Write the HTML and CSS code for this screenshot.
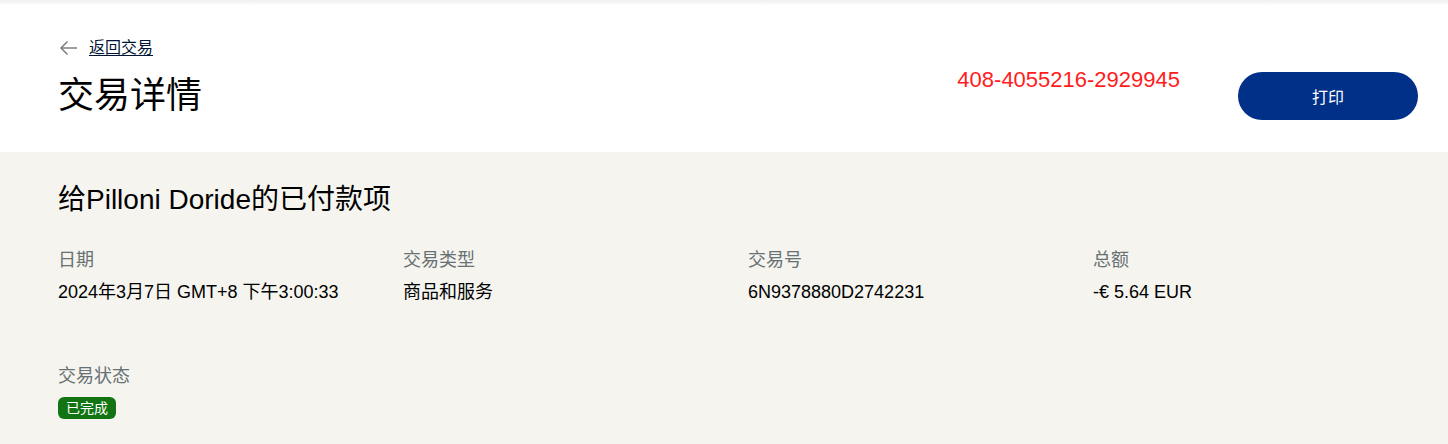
FILE: index.html
```html
<!DOCTYPE html>
<html lang="zh-CN">
<head>
<meta charset="utf-8">
<title>交易详情</title>
<link rel="stylesheet" href="styles.css">
</head>
<body>
<header class="page-header">
  <div class="header-left">
    <a class="back-link" href="#">
      <svg class="back-icon" width="19" height="16" viewBox="0 0 19 16" aria-hidden="true">
        <path d="M18 8H2M8.5 1.5L2 8l6.5 6.5" fill="none" stroke="#7b8085" stroke-width="1.5"/>
      </svg>
      <span class="back-text">返回交易</span>
    </a>
    <h1 class="page-title">交易详情</h1>
  </div>
  <div class="header-right">
    <div class="ref-number">408-4055216-2929945</div>
    <button class="print-btn" type="button">打印</button>
  </div>
</header>
<main class="details">
  <h2 class="details-title">给Pilloni Doride的已付款项</h2>
  <div class="info-grid">
    <div class="info-item">
      <div class="info-label">日期</div>
      <div class="info-value">2024年3月7日 GMT+8 下午3:00:33</div>
    </div>
    <div class="info-item">
      <div class="info-label">交易类型</div>
      <div class="info-value">商品和服务</div>
    </div>
    <div class="info-item">
      <div class="info-label">交易号</div>
      <div class="info-value">6N9378880D2742231</div>
    </div>
    <div class="info-item">
      <div class="info-label">总额</div>
      <div class="info-value">-€ 5.64 EUR</div>
    </div>
  </div>
  <div class="status-block">
    <div class="info-label">交易状态</div>
    <span class="status-badge">已完成</span>
  </div>
</main>
</body>
</html>
```
FILE: styles.css
```css
* {
  box-sizing: border-box;
}

html, body {
  margin: 0;
  padding: 0;
}

body {
  width: 1448px;
  height: 444px;
  overflow: hidden;
  background: #f5f4ef;
  font-family: "Liberation Sans", "Noto Sans CJK SC", Arial, sans-serif;
  color: #000;
}

.page-header {
  height: 152px;
  background: linear-gradient(#efefef, #f6f6f6 3px, #fff 5px);
  display: flex;
  justify-content: space-between;
  padding: 4px 30px 0 58px;
}

.header-left {
  display: flex;
  flex-direction: column;
  padding-top: 32px;
}

.back-link {
  display: flex;
  align-items: center;
  gap: 11px;
  color: #001435;
  text-decoration: none;
  height: 24px;
}

.back-icon {
  display: block;
  margin-left: 1px;
}

.back-text {
  font-size: 16px;
  line-height: 24px;
  text-decoration: underline;
  text-underline-offset: 2px;
}

.page-title {
  margin: 14px 0 0 0;
  font-size: 36px;
  line-height: 44px;
  font-weight: 400;
  color: #000;
}

.header-right {
  display: flex;
  align-items: flex-start;
  gap: 58px;
  padding-top: 61px;
}

.ref-number {
  color: #ff1c1c;
  font-size: 22px;
  line-height: 30px;
}

.print-btn {
  width: 180px;
  height: 48px;
  margin-top: 7px;
  border: none;
  border-radius: 24px;
  background: #003087;
  color: #fff;
  font-family: inherit;
  font-size: 16px;
  cursor: pointer;
}

.details {
  padding: 30px 30px 0 58px;
}

.details-title {
  margin: 0;
  font-size: 28px;
  line-height: 36px;
  font-weight: 400;
  color: #000;
}

.info-grid {
  display: grid;
  grid-template-columns: repeat(4, 345px);
  margin-top: 30px;
}

.info-label {
  font-size: 18px;
  line-height: 24px;
  color: #687173;
}

.info-value {
  margin-top: 8px;
  font-size: 18px;
  line-height: 24px;
  color: #000;
}

.status-block {
  margin-top: 60px;
  display: flex;
  flex-direction: column;
  align-items: flex-start;
}

.status-badge {
  margin-top: 9px;
  display: inline-block;
  height: 22px;
  padding: 0 8px;
  line-height: 22px;
  font-size: 14px;
  color: #fff;
  background: #127412;
  border-radius: 6px;
}
```
